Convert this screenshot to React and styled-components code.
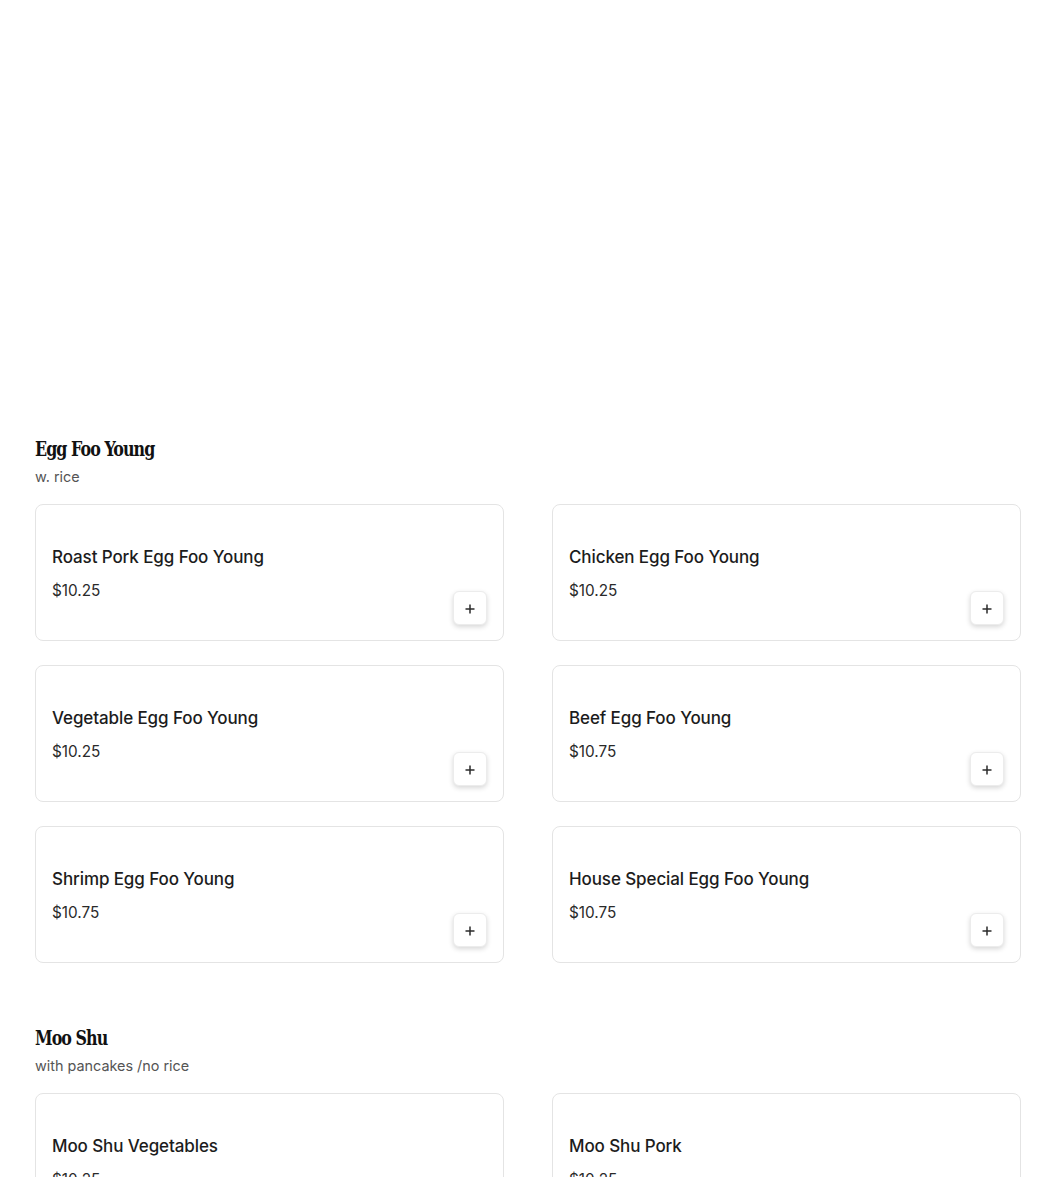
import styled, { createGlobalStyle } from 'styled-components';

const GlobalStyle = createGlobalStyle`
  html, body {
    margin: 0;
    padding: 0;
    background: #ffffff;
    overflow: hidden;
  }
`;

const Page = styled.main`
  height: 1177px;
  overflow: hidden;
  padding: 435px 29px 0 35px;
  font-family: Inter, "Liberation Sans", sans-serif;
`;

const Section = styled.section`
  margin-bottom: 61px;
`;

const SectionTitle = styled.h2`
  margin: 0;
  height: 28px;
  font-family: "DejaVu Serif Condensed", "DejaVu Serif", "Liberation Serif", serif;
  font-size: 21px;
  line-height: 28px;
  font-weight: 700;
  letter-spacing: -1.1px;
  color: #111111;
  transform: scaleX(0.84);
  transform-origin: left center;
`;

const SectionNote = styled.p`
  margin: 0 0 15px;
  height: 26px;
  font-size: 14.4px;
  line-height: 28px;
  color: #555555;
`;

const CardGrid = styled.div`
  display: grid;
  grid-template-columns: 469px 469px;
  column-gap: 48px;
  row-gap: 24px;
`;

const Card = styled.article`
  box-sizing: border-box;
  height: 137px;
  padding: 41px 16px 0;
  border: 1px solid #e4e4e4;
  border-radius: 8px;
  display: flex;
  flex-direction: column;
  background: #ffffff;
`;

const ItemName = styled.h3`
  margin: 0;
  font-size: 17px;
  line-height: 22px;
  font-weight: 500;
  letter-spacing: -0.1px;
  color: #1c1c1c;
`;

const CardFooter = styled.div`
  display: flex;
  justify-content: space-between;
  align-items: flex-start;
  margin-top: 12px;
`;

const Price = styled.span`
  font-size: 15.3px;
  line-height: 22px;
  color: #2a2a2a;
`;

const AddButton = styled.button`
  box-sizing: border-box;
  width: 34px;
  height: 34px;
  margin-top: 11px;
  padding: 2px 0 0;
  display: flex;
  align-items: center;
  justify-content: center;
  border: 1px solid #ececec;
  border-radius: 6px;
  background: #ffffff;
  box-shadow: 0 2px 5px rgba(0, 0, 0, 0.16);
`;

const sections = [
  {
    title: 'Egg Foo Young',
    note: 'w. rice',
    items: [
      ['Roast Pork Egg Foo Young', '$10.25'],
      ['Chicken Egg Foo Young', '$10.25'],
      ['Vegetable Egg Foo Young', '$10.25'],
      ['Beef Egg Foo Young', '$10.75'],
      ['Shrimp Egg Foo Young', '$10.75'],
      ['House Special Egg Foo Young', '$10.75'],
    ],
  },
  {
    title: 'Moo Shu',
    note: 'with pancakes /no rice',
    items: [
      ['Moo Shu Vegetables', '$10.25'],
      ['Moo Shu Pork', '$10.25'],
    ],
  },
];

function PlusIcon() {
  return (
    <svg width="10" height="10" viewBox="0 0 10 10">
      <path d="M5 0.5v9M0.5 5h9" stroke="#2b2b2b" strokeWidth="1.5" fill="none" />
    </svg>
  );
}

export default function App() {
  return (
    <Page>
      <GlobalStyle />
      {sections.map(section => (
        <Section key={section.title}>
          <SectionTitle>{section.title}</SectionTitle>
          <SectionNote>{section.note}</SectionNote>
          <CardGrid>
            {section.items.map(([name, price]) => (
              <Card key={name}>
                <ItemName>{name}</ItemName>
                <CardFooter>
                  <Price>{price}</Price>
                  <AddButton aria-label={`Add ${name}`}>
                    <PlusIcon />
                  </AddButton>
                </CardFooter>
              </Card>
            ))}
          </CardGrid>
        </Section>
      ))}
    </Page>
  );
}
